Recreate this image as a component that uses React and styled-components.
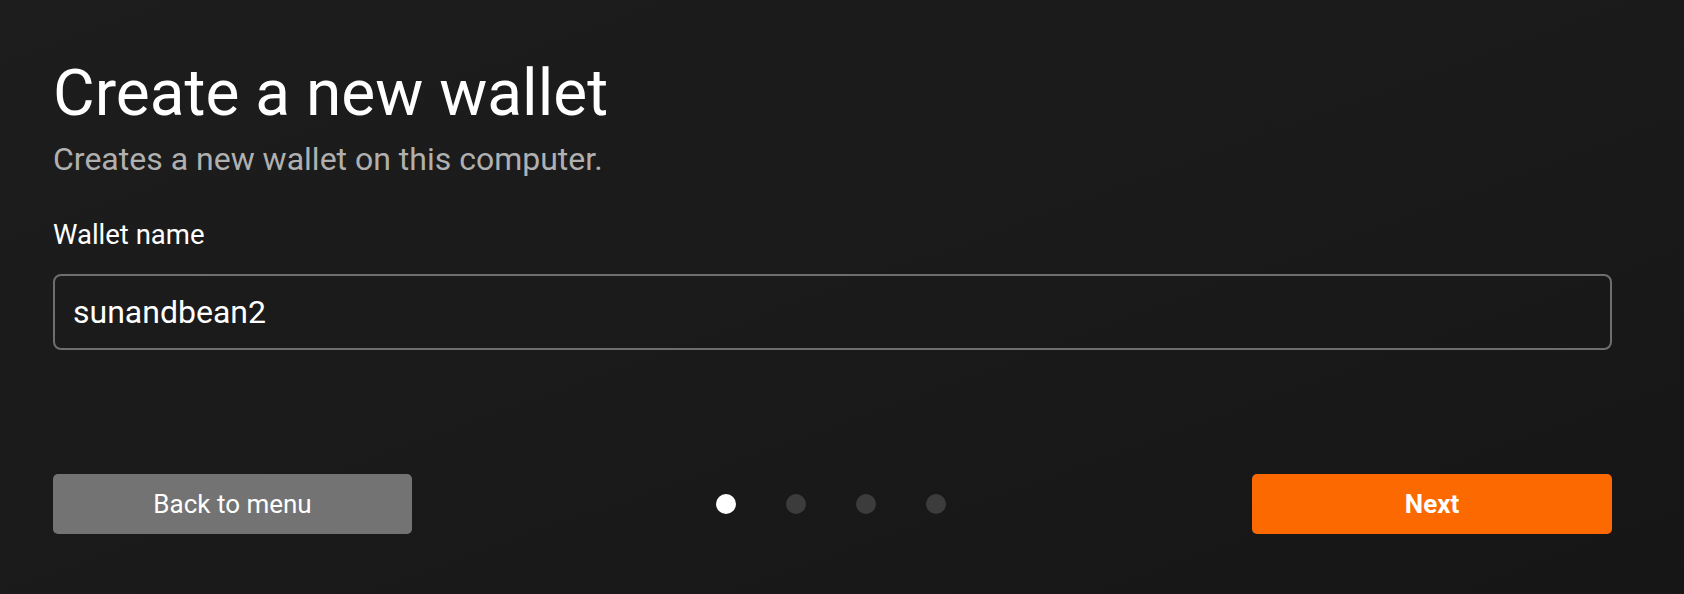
import React, { useState } from "react";
import styled, { createGlobalStyle } from "styled-components";

const GlobalStyle = createGlobalStyle`
  html, body {
    margin: 0;
    padding: 0;
    height: 100%;
  }
  body {
    background: #1a1a1a;
    font-family: Roboto, "Noto Sans", sans-serif;
    color: #fff;
  }
  #root {
    height: 100%;
  }
`;

const Page = styled.div`
  box-sizing: border-box;
  min-height: 100vh;
  display: flex;
  flex-direction: column;
  padding: 56px 72px 60px 53px;
  background: linear-gradient(160deg, #1d1d1d 0%, #1a1a1a 50%, #161616 100%);
`;

const Title = styled.h1`
  margin: 0;
  font-size: 64px;
  font-weight: 400;
  line-height: 75px;
  color: #ffffff;
`;

const Subtitle = styled.p`
  margin: 10px 0 0;
  font-size: 32px;
  font-weight: 400;
  line-height: 37px;
  color: #b0b0b0;
`;

const Label = styled.label`
  display: block;
  margin-top: 41px;
  font-size: 27.5px;
  line-height: 32px;
  color: #ffffff;
`;

const Input = styled.input`
  box-sizing: border-box;
  display: block;
  width: 100%;
  height: 76px;
  margin-top: 23px;
  padding: 0 18px;
  background: transparent;
  border: 2px solid #6e6e6e;
  border-radius: 8px;
  font-family: inherit;
  font-size: 32px;
  color: #ffffff;
  outline: none;
`;

const Footer = styled.div`
  margin-top: auto;
  display: grid;
  grid-template-columns: 359px 1fr 360px;
  align-items: center;
`;

const Button = styled.button`
  height: 60px;
  border: none;
  border-radius: 5px;
  font-family: inherit;
  font-size: 26px;
  font-weight: ${(p) => (p.$primary ? 700 : 400)};
  color: #ffffff;
  background: ${(p) => (p.$primary ? "#fb6900" : "#737373")};
  cursor: pointer;
`;

const Dots = styled.div`
  display: flex;
  justify-content: center;
  gap: 50px;
  padding-right: 3px;
`;

const Dot = styled.span`
  width: 20px;
  height: 20px;
  border-radius: 50%;
  background: ${(p) => (p.$active ? "#ffffff" : "#3c3c3c")};
`;

export default function App() {
  const [name, setName] = useState("sunandbean2");
  const step = 0;

  return (
    <>
      <GlobalStyle />
      <Page>
        <Title>Create a new wallet</Title>
        <Subtitle>Creates a new wallet on this computer.</Subtitle>
        <Label htmlFor="wallet-name">Wallet name</Label>
        <Input
          id="wallet-name"
          value={name}
          onChange={(e) => setName(e.target.value)}
        />
        <Footer>
          <Button>Back to menu</Button>
          <Dots>
            {[0, 1, 2, 3].map((i) => (
              <Dot key={i} $active={i === step} />
            ))}
          </Dots>
          <Button $primary>Next</Button>
        </Footer>
      </Page>
    </>
  );
}
